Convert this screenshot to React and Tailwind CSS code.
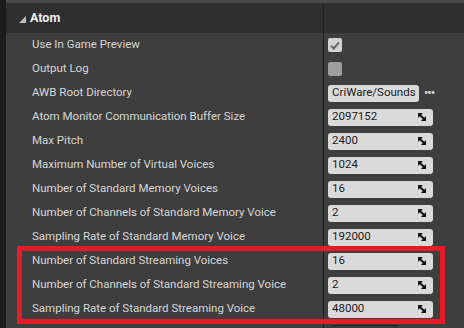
import React from 'react'

const rows = [
  { label: 'Use In Game Preview', kind: 'check', checked: true },
  { label: 'Output Log', kind: 'check', checked: false },
  { label: 'AWB Root Directory', kind: 'path', value: 'CriWare/Sounds' },
  { label: 'Atom Monitor Communication Buffer Size', kind: 'num', value: '2097152' },
  { label: 'Max Pitch', kind: 'num', value: '2400' },
  { label: 'Maximum Number of Virtual Voices', kind: 'num', value: '1024' },
  { label: 'Number of Standard Memory Voices', kind: 'num', value: '16' },
  { label: 'Number of Channels of Standard Memory Voice', kind: 'num', value: '2' },
  { label: 'Sampling Rate of Standard Memory Voice', kind: 'num', value: '192000' },
  { label: 'Number of Standard Streaming Voices', kind: 'num', value: '16' },
  { label: 'Number of Channels of Standard Streaming Voice', kind: 'num', value: '2' },
  { label: 'Sampling Rate of Standard Streaming Voice', kind: 'num', value: '48000' }
]

function SpinIcon () {
  return (
    <svg width="8" height="8" viewBox="0 0 8 8" className="shrink-0">
      <path d="M0 0 L5 0 L0 5 Z" fill="#111" />
      <path d="M8 8 L3 8 L8 3 Z" fill="#111" />
      <path d="M1 1 L7 7" stroke="#111" strokeWidth="2" />
    </svg>
  )
}

function Value ({ row }) {
  if (row.kind === 'check') {
    return (
      <div className={`w-[14px] h-[14px] rounded-[2px] flex items-center justify-center ${row.checked ? 'bg-[#d2d2d2]' : 'bg-[#9e9e9e]'}`}>
        {row.checked && (
          <svg width="10" height="9" viewBox="0 0 10 9">
            <path d="M1 4.8 L3.8 7.4 L9 1.4" stroke="#6a6a6a" strokeWidth="2.2" fill="none" />
          </svg>
        )}
      </div>
    )
  }
  if (row.kind === 'path') {
    return (
      <div className="flex items-center">
        <div className="h-[17px] w-[91px] rounded-[3px] bg-[#dadada] flex items-center px-[4px] text-[11.5px] text-[#1a1a1a] whitespace-nowrap">
          {row.value}
        </div>
        <span className="ml-[5px] text-[12px] font-bold text-[#d8d8d8] leading-none tracking-[-1px]">•••</span>
      </div>
    )
  }
  return (
    <div className="h-[17px] w-[105px] rounded-[3px] bg-[#dadada] flex items-center justify-between pl-[4px] pr-[7px] text-[11.5px] text-[#1a1a1a]">
      <span>{row.value}</span>
      <SpinIcon />
    </div>
  )
}

export default function App () {
  return (
    <div className="relative w-[464px] h-[328px] overflow-hidden flex bg-[#3e3e3e]" style={{ fontFamily: 'Roboto, "Liberation Sans", sans-serif' }}>
      <div className="w-[6px] shrink-0 bg-[#1c1c1c]" />
      <div className="flex-1 flex flex-col">
        <div className="h-[3px] shrink-0 bg-[#4a4a4a]" />
        <div className="h-[30px] shrink-0 flex bg-[#2f2f2f]">
          <div className="w-[318px] flex items-center pl-[13px] border-r border-[#1f1f1f]">
            <svg width="7" height="7" viewBox="0 0 7 7" className="mr-[4px] mt-[2px]">
              <path d="M7 0 L7 7 L0 7 Z" fill="#bdbdbd" />
            </svg>
            <span className="text-[12.5px] font-bold text-[#f0f0f0]">Atom</span>
          </div>
        </div>
        {rows.map(row => (
          <div key={row.label} className="h-[24px] flex shrink-0">
            <div className="w-[318px] flex items-center pl-[26px] border-r border-[#1f1f1f] text-[11.5px] text-[#d6d6d6]">
              {row.label}
            </div>
            <div className="flex-1 flex items-center pl-[4px]">
              <Value row={row} />
            </div>
          </div>
        ))}
        <div className="flex-1 flex">
          <div className="w-[318px] border-r border-[#1f1f1f]" />
          <div className="flex-1 pl-[8px] pt-[4px]">
            <div className="w-[66px] h-[4px] border-t border-[#222] bg-[#3a3a3a]" />
          </div>
        </div>
      </div>
      <div className="absolute left-[17px] top-[246px] w-[428px] h-[78px] border-[5px] border-[#e41e26]" />
    </div>
  )
}
